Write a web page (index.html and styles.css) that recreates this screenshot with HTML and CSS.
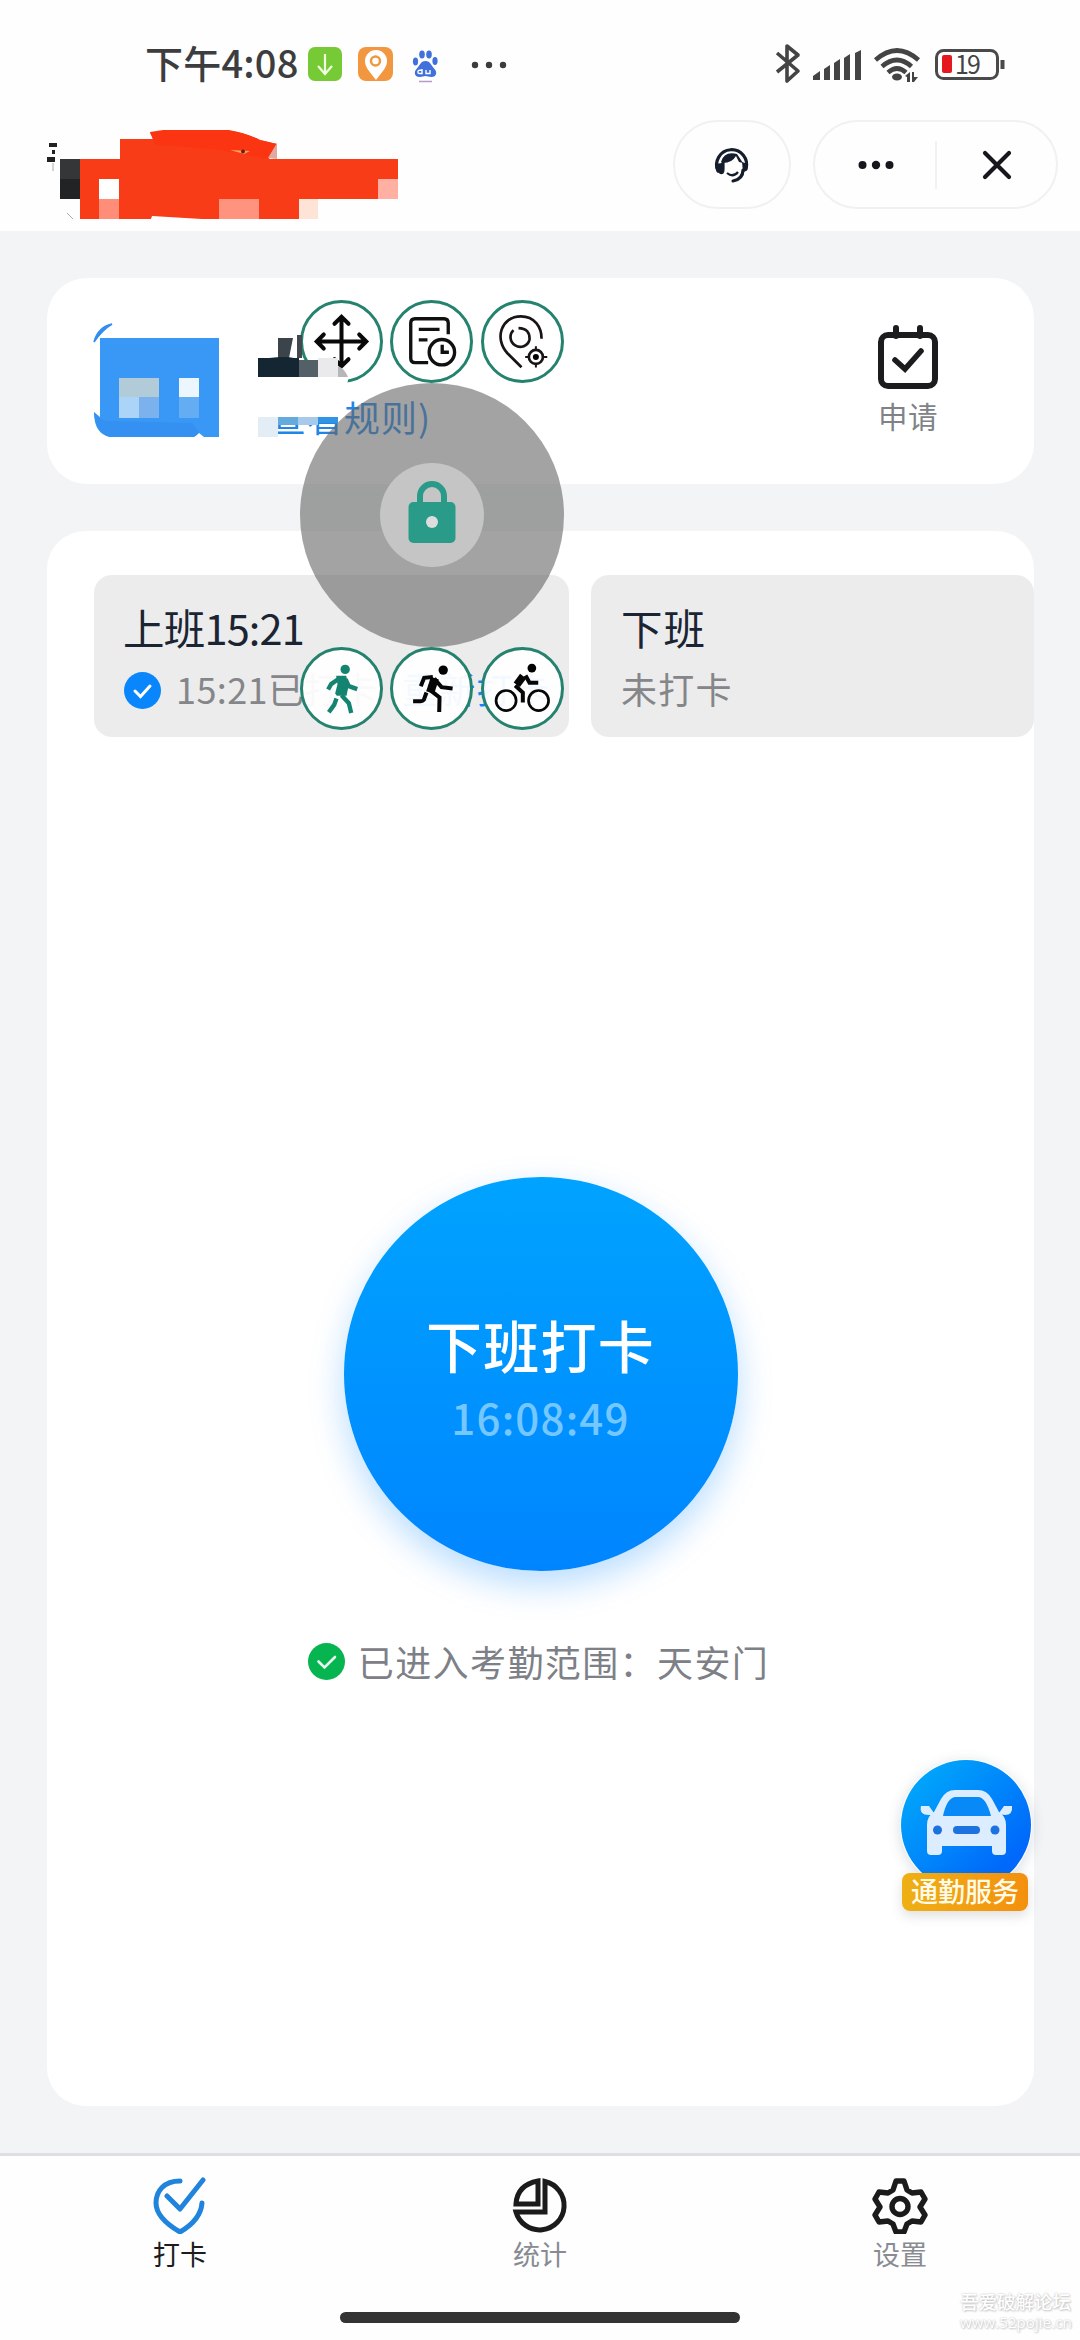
FILE: index.html
```html
<!DOCTYPE html>
<html lang="zh-CN">
<head>
<meta charset="utf-8">
<title>打卡</title>
<link rel="stylesheet" href="styles.css">
</head>
<body>
<div class="screen">
  <div class="status">
    <span class="clock">下午4:08</span>
    <svg class="notify" width="200" height="40" viewBox="0 0 200 40">
      <rect x="0" y="3" width="34" height="34" rx="7" fill="#76ca35"/>
      <path d="M17 10v19M10 22l7 8 7-8" fill="none" stroke="#efffe0" stroke-width="2.2"/>
      <rect x="50" y="3" width="35" height="34" rx="8" fill="#f2973f"/>
      <path d="M68 36C61 27 57 23 57 17a11 11 0 0 1 22 0c0 6-4 10-11 19z" fill="#fff"/>
      <circle cx="67.500" cy="17" r="4.500" fill="none" stroke="#f2973f" stroke-width="2.500"/>
      <g fill="#416fdc"><ellipse cx="107.500" cy="17.500" rx="2.600" ry="4"/><ellipse cx="114" cy="10.500" rx="2.800" ry="4"/><ellipse cx="121" cy="10.500" rx="2.800" ry="4"/><ellipse cx="127" cy="17" rx="2.600" ry="4"/><path d="M117.500 17c5 0 6 5 9 8s2 8-3 8c-3 0-4-1-6-1s-3 1-6 1c-5 0-6-5-3-8s4-8 9-8z"/></g>
      <path d="M114 25v4.500h-2.500a1.600 1.600 0 0 1 0-3.200h2.500M118 26v3.500h4V26" fill="none" stroke="#fff" stroke-width="1.400"/>
      <path d="M111 37.500h13" stroke="#b99bc8" stroke-width="1.500"/>
      <g fill="#3c3c3e"><circle cx="167" cy="21" r="3.200"/><circle cx="181" cy="21" r="3.200"/><circle cx="195" cy="21" r="3.200"/></g>
    </svg>
    <svg class="radios" width="234" height="44" viewBox="0 0 234 44">
      <path d="M2 13l21 18-11 10V6l11 9L2 32" fill="none" stroke="#444" stroke-width="3.600" stroke-linejoin="round"/>
      <g transform="translate(-3 0)"><g fill="#444"><path d="M41 40v-4l7-5v9z"/><path d="M52 40V29l6-4v15z"/><path d="M62 40V23l6-4v21z"/><path d="M72 40V18l6-4v26z"/><path d="M83 40V13l6-3v30z"/><ellipse cx="125" cy="37" rx="5" ry="3.500"/><path d="M133 36l5-4v10h-3v-5zM140 32h2v5h4l-4 5h-2z"/></g>
      <path d="M103.500 20q21.500-19 43 0M110 26.500q15-13 29.500 0M116 32.500q9-8 18 0" fill="none" stroke="#444" stroke-width="4.600"/></g>
      <rect x="161.500" y="10.500" width="61" height="28" rx="7" fill="none" stroke="#4a4a4a" stroke-width="3"/>
      <rect x="167" y="15" width="10" height="18" rx="2" fill="#e5181f"/>
      <path d="M227.500 20v9" stroke="#4a4a4a" stroke-width="4"/>
      <text x="180" y="34" class="battery">19</text>
    </svg>
  </div>

  <header class="bar">
    <svg class="masked-title" width="380" height="100" viewBox="30 130 380 100">
      <path d="M49 143h8v4h-8zM52 150h3v4h-3zM47 157h8v5h-8z" fill="#222"/>
      <path d="M53 163v8M67 213l6 6" stroke="#aaa"/>
      <path d="M60 159h20v20H60z" fill="#353638"/><path d="M60 179h20v20H60z" fill="#222324"/>
      <path d="M80 159h40v-20h34l-4-6q72-12 110 7l17 4-8 15h129v40h-99v20H202l-50-3-1 3H80z" fill="#f83c18"/>
      <path d="M155 145l-5-13q70-12 110 8l17 4-10 15q-50-12-112-14z" fill="#fb3512"/>
      <path d="M268 158l9-15v16z" fill="#e3a7a1"/>
      <path d="M99 179h20v20H99z" fill="#fff"/><path d="M99 199h20v20H99z" fill="#ff8d78"/>
      <path d="M219 199h40v20h-40z" fill="#ff937e"/><path d="M299 199h19v20h-19z" fill="#fde4d7"/><path d="M378 179h20v20h-20z" fill="#ffb0a3"/>
      <path d="M230 150l20 1-6 3z" fill="#ffa05e"/><circle cx="243" cy="151.500" r="2" fill="#62200e"/>
    </svg>
    <div class="pill service">
      <svg width="42" height="42" viewBox="0 0 42 42"><path d="M7 27a15 15 0 1 1 28-2M9 28q3 2 3-3v-6M32 26q0 9-10 11" fill="none" stroke="#151c2b" stroke-width="3.200" stroke-linecap="round"/><path d="M10 18q3-11 16-8l6 9-4-1-3-6q-4 7-13 7z" fill="#151c2b"/><path d="M4 20l7-1v10q-7 0-7-9zM31 18l6 2q0 8-5 8z" fill="#151c2b"/><path d="M16 29q6 5 11-1" fill="none" stroke="#151c2b" stroke-width="2.200"/></svg>
    </div>
    <div class="pill capsule">
      <svg width="36" height="12" viewBox="0 0 36 12" fill="#15171c"><circle cx="4.500" cy="6" r="4"/><circle cx="18" cy="6" r="4.200"/><circle cx="31.500" cy="6" r="4"/></svg>
      <i></i>
      <svg width="32" height="32" viewBox="0 0 32 32"><path d="M4 4l24 24M28 4L4 28" stroke="#15171c" stroke-width="4.200" stroke-linecap="round"/></svg>
    </div>
  </header>

  <main class="content">
    <section class="profile">
      <svg class="avatar" width="126" height="118" viewBox="93 322 126 118">
        <path d="M94 342q4-15 18-18-10 6-18 18z" fill="#328df0" stroke="#328df0" stroke-width="1.500"/>
        <path d="M100 338h119v99h-15l-5-4-5 4h-84q-16-3-16-25l6 5z" fill="#3997f6"/>
        <path d="M94 412q4 8 13 9l85 2 7 9q-2 5-8 5h-81q-14-4-16-25z" fill="#3490f1"/>
        <path d="M119 378h40v40h-40z" fill="#abd4f8"/><path d="M119 378h40v19h-40z" fill="#b1ccd8"/><path d="M139 397h20v21h-20z" fill="#7bb1ed"/>
        <path d="M179 378h20v19h-20z" fill="#ebf6fe"/><path d="M179 397h20v21h-20z" fill="#65adf3"/>
      </svg>
      <a class="rules">查看规则)</a>
      <div class="apply">
        <svg width="62" height="66" viewBox="0 0 62 66"><path d="M19 3v8M43 3v8" stroke="#1c1c1e" stroke-width="6" stroke-linecap="round"/><rect x="4" y="10" width="54" height="51" rx="7" fill="none" stroke="#1c1c1e" stroke-width="6"/><path d="M18 35l10 9 16-18" fill="none" stroke="#1c1c1e" stroke-width="5.600" stroke-linecap="round"/></svg>
        <span>申请</span>
      </div>
    </section>

    <section class="punch">
      <div class="shifts">
        <div class="shift first">
          <h3>上班15:21</h3>
          <p><svg width="37" height="37" viewBox="0 0 37 37"><circle cx="18.500" cy="18.500" r="18.500" fill="#0a86fc"/><path d="M11 19l5.500 5.500L26 14" fill="none" stroke="#fff" stroke-width="3" stroke-linecap="round"/></svg><span class="done">15:21已打卡</span><a>重新打卡</a></p>
        </div>
        <div class="shift second">
          <h3>下班</h3>
          <p><span>未打卡</span></p>
        </div>
      </div>
      <button class="round"><b>下班打卡</b><span>16:08:49</span></button>
      <div class="range"><svg width="37" height="37" viewBox="0 0 37 37"><circle cx="18.500" cy="18.500" r="18.500" fill="#06b550"/><path d="M10.500 18.500l6 6L27 14" fill="none" stroke="#e8fff0" stroke-width="2.600" stroke-linecap="round"/></svg><span>已进入考勤范围：天安门</span></div>
    </section>
  </main>

  <nav class="tabs">
    <div class="tab on"><svg width="56" height="58" viewBox="0 0 56 58"><path d="M28 5C12 5 4 15 4 27c0 12 12 22 24 29 12-7 21-16 22-29M15 20l13 13L51 4" fill="none" stroke="#2184dc" stroke-width="5" stroke-linecap="round" stroke-linejoin="round"/></svg><span>打卡</span></div>
    <div class="tab"><svg width="56" height="58" viewBox="0 0 56 58"><g fill="none" stroke="#1b1b1c" stroke-width="5"><path d="M26 5v23H4Q5 9 26 5z"/><path d="M33 5.500A24.500 24.500 0 1 1 4 36h29z"/></g></svg><span>统计</span></div>
    <div class="tab"><svg width="56" height="58" viewBox="0 0 56 58"><path d="M24 5h8l3 9 5 3 9-1 4 7-5 8 5 8-4 7-9-1-5 3-3 8h-8l-3-8-5-3-9 1-4-7 5-8-5-8 4-7 9 1 5-3z" fill="none" stroke="#1b1b1c" stroke-width="5.400" stroke-linejoin="round"/><circle cx="28" cy="30.500" r="8" fill="none" stroke="#1b1b1c" stroke-width="5.400"/></svg><span>设置</span></div>
  </nav>
  <div class="home"></div>

  <div class="commute">
    <svg width="132" height="132" viewBox="0 0 132 132">
      <defs><linearGradient id="sky" x1="0" y1="0" x2="1" y2="1"><stop offset=".1" stop-color="#00a8fb"/><stop offset=".8" stop-color="#0069fb"/></linearGradient></defs>
      <circle cx="66" cy="66" r="65" fill="url(#sky)"/>
      <g fill="#dcedff"><path d="M27 66q0-9 7-13l7-13q5-9 14-9h23q9 0 14 9l7 13q7 4 7 13v26q0 4-4 4h-6q-4 0-4-4v-5H42v5q0 4-4 4h-7q-4 0-4-4z"/><path d="M21 47h8l5 7q-1 2-5 2-10 0-8-9zM104 47h8q1 9-7 9-4 0-6-2z"/></g>
      <path d="M43 57q4-19 13-19h22q8 0 13 19z" fill="#0789f8"/>
      <g fill="#1c72df"><circle cx="37.500" cy="71" r="4.500"/><circle cx="95" cy="71" r="4.500"/><rect x="53" y="67" width="27" height="8" rx="4"/></g>
    </svg>
    <span>通勤服务</span>
  </div>

  <div class="floater">
    <div class="joystick"><div><svg width="52" height="66" viewBox="0 0 52 66"><path d="M14 27V17a12 12 0 0 1 24 0v10" fill="none" stroke="#2a9b88" stroke-width="6"/><rect x="2.500" y="23" width="47" height="41" rx="5" fill="#2a9b88"/><circle cx="26" cy="43" r="6" fill="#ddd"/></svg></div></div>
    <svg class="tool t1" viewBox="-115 -115 230 230"><path d="M-73 0H73M0-73V73M-21-53L0-74 21-53M-21 53L0 74 21 53M-53-21L-74 0-53 21M53-21L74 0 53 21" fill="none" stroke="#090909" stroke-width="12" stroke-linecap="round"/></svg>
    <svg class="tool t2" viewBox="-115 -115 230 230"><path d="M50-22v-33q0-13-13-13h-86q-13 0-13 13V50q0 13 13 13h39M-38-36h62M-38-5h26M32 10v22h20" fill="none" stroke="#101010" stroke-width="10"/><circle cx="31" cy="32" r="38" fill="none" stroke="#101010" stroke-width="10"/></svg>
    <svg class="tool t3" viewBox="-115 -115 230 230"><path d="M-3 77L-45 35C-85-8-64-75-5-75 36-75 57-43 57-8M-27-34A29 29 0 1 0 21-5M-12-40Q23-39 21-5" fill="none" stroke="#1a1515" stroke-width="8"/><circle cx="40" cy="46" r="21" fill="none" stroke="#1a1515" stroke-width="8"/><circle cx="40" cy="46" r="9"/><path d="M40 14v14M40 64v14M8 46h14M58 46h16" stroke="#1a1515" stroke-width="6"/></svg>
    <svg class="tool t4" viewBox="-115 -115 230 230"><g fill="none" stroke="#148370" stroke-width="13" stroke-linejoin="round"><path d="M-8-29l-23 16-9 16M12-28l10 21 25 9M0 20l22 24 7 29M-15 30l-7 19-16 22"/></g><path d="M-16-38H14l7 31-6 29h-29l-5-7 7-28z" fill="#148370"/><circle cx="11" cy="-57" r="14" fill="#148370"/></svg>
    <svg class="tool t5" viewBox="-115 -115 230 230"><g fill="none" stroke="#060606"><path d="M-32-7l10-25 26-2M8-30l22 26 33 4M-4 5l28 22-1 43M-15 12l-8 22q-3 4-9 4h-23" stroke-width="12"/><path d="M10-31L-4 12" stroke-width="25"/></g><circle cx="35" cy="-55" r="14"/></svg>
    <svg class="tool t6" viewBox="-115 -115 230 230"><g fill="none" stroke="#060606"><circle cx="-49" cy="36" r="30" stroke-width="8"/><circle cx="48" cy="36" r="30" stroke-width="8"/><path d="M9-39l12 22h26M-22-9L1 12v30" stroke-width="12"/><path d="M2-37l-19 26" stroke-width="23"/></g><circle cx="28" cy="-61" r="13"/></svg>
  </div>
  <svg class="name-mask" width="100" height="106" viewBox="256 332 100 106">
    <path d="M258 377h91l-8 27 2 12-8 2h-77z" fill="#fff"/>
    <path d="M278 338h15l-4 20h-11z" fill="#3b444b"/><path d="M297 335h5v23h-5z" fill="#42484d"/>
    <path d="M258 358h11q17-2 25 0h5v19h-41z" fill="#142631"/><path d="M299 360h19v17h-19z" fill="#546067"/><path d="M318 358h20v19h-20z" fill="#eae9ec"/><path d="M338 366q7 3 10 11h-10z" fill="#b7b6b8"/>
    <path d="M258 417h20v20h-20z" fill="#e3edf5"/><path d="M278 417h20v8h-20z" fill="#65aadd"/><path d="M298 417h20v8h-20z" fill="#a7c9ea"/><path d="M318 417h20v6h-20z" fill="#3193e4"/>
  </svg>
  <div class="watermark"><b>吾爱破解论坛</b><span>www.52pojie.cn</span></div>
</div>
</body>
</html>
```
FILE: styles.css
```css
* { box-sizing: border-box; }
body, h3, p { margin: 0; }
body { background: #fefefe; font-family: "Noto Sans CJK SC", sans-serif; }
svg { display: block; flex: none; }
.screen { position: relative; width: 1080px; height: 2340px; overflow: hidden; display: flex; flex-direction: column; }

.status { height: 110px; padding: 18px 74px 0 145px; display: flex; align-items: center; }
.clock { width: 163px; font-size: 38px; line-height: 50px; font-weight: 500; letter-spacing: .2px; color: #3d3d3f; white-space: nowrap; height: 92px; padding-top: 19px; }
.notify { align-self: flex-start; margin-top: 26px; }
.radios { align-self: flex-start; margin: 22px -3px 0 auto; }
.battery { font: 25px "Noto Sans CJK SC", sans-serif; fill: #444; letter-spacing: -2px; }

.bar { height: 121px; padding: 0 22px 0 30px; display: flex; align-items: flex-start; }
.masked-title { margin-top: 20px; }
.pill { height: 89px; margin-top: 10px; border: 2px solid #f1f1f2; border-radius: 45px; display: flex; align-items: center; justify-content: center; }
.service { width: 118px; margin-left: auto; }
.capsule { width: 245px; margin-left: 22px; padding: 0 43px; justify-content: space-between; }
.capsule i { width: 2px; height: 48px; background: #f2f2f3; margin-left: -3px; }

.content { height: 1922px; background: #f3f4f6; padding: 47px 46px 0 47px; display: flex; flex-direction: column; gap: 47px; }
.profile { height: 206px; background: #fff; border-radius: 40px; display: flex; padding-left: 46px; }
.avatar { margin-top: 44px; }
.rules { margin: 112px 0 0 51px; font-size: 36px; line-height: 52px; letter-spacing: 1px; color: #1f86e8; }
.apply { margin: 47px 95px 0 auto; display: flex; flex-direction: column; align-items: center; }
.apply span { font-size: 29.5px; line-height: 40px; margin-top: 4px; color: #7f8389; letter-spacing: .5px; }

.punch { height: 1575px; background: #fff; border-radius: 38px; padding-top: 44px; display: flex; flex-direction: column; align-items: center; }
.shifts { width: 100%; padding-left: 47px; display: flex; gap: 22px; }
.shift { height: 162px; background: #ececec; border-radius: 18px; padding: 22px 0 0 30px; white-space: nowrap; overflow: hidden; }
.first { width: 475px; padding-left: 29px; }
.second { flex: 1; }
.shift h3 { font-size: 41.5px; line-height: 60px; margin-bottom: 3px; font-weight: 400; color: #1b2433; letter-spacing: 1px; }
.first h3 { letter-spacing: -.8px; }
.shift p { display: flex; align-items: center; height: 60px; font-size: 36px; letter-spacing: 1.2px; color: #85868a; }
.shift p span, .shift a { margin-top: -5px; }
.shift .done { margin-left: 15px; letter-spacing: .4px; width: 226px; }
.shift a { color: #1683fa; }
.first p svg { margin-left: 1px; }
.round { width: 394px; height: 394px; margin-top: 440px; border: 0; border-radius: 50%; background: linear-gradient(#00a3ff, #0085ff); box-shadow: 0 14px 34px rgba(0, 133, 255, .28); color: #fff; font-family: inherit; display: flex; flex-direction: column; align-items: center; padding: 130px 0 0; }
.round b { font-size: 56px; line-height: 74px; font-weight: 500; letter-spacing: 1.2px; }
.round span { font-size: 42px; line-height: 60px; margin-top: 6px; font-weight: 500; letter-spacing: 1.2px; color: #75c7ff; }
.range { margin: 62px 4px 0 0; height: 56px; display: flex; align-items: center; gap: 13px; font-size: 36px; letter-spacing: 1.4px; color: #7d8086; white-space: nowrap; }

.tabs { height: 145px; background: #fefefe; border-top: 3px solid #dddfe2; display: flex; padding-top: 20px; }
.tab { flex: 1; display: flex; flex-direction: column; align-items: center; font-size: 27px; line-height: 40px; color: #898b92; }
.tab span { margin-top: 0; }
.on { color: #1c1c1e; }
.home { width: 400px; height: 11px; margin: 14px auto 0; border-radius: 6px; background: #333; }

.commute { position: absolute; left: 900px; top: 1759px; width: 132px; height: 152px; }
.commute svg { border-radius: 50%; box-shadow: 0 3px 14px rgba(60, 80, 100, .2); }
.commute span { position: absolute; left: 2px; bottom: 0; width: 126px; height: 38px; border-radius: 8px; background: linear-gradient(90deg, #eeb014, #f48f0e); color: #fffbe8; font-size: 27px; line-height: 36px; font-weight: 500; text-align: center; white-space: nowrap; box-shadow: 0 5px 12px rgba(100, 100, 100, .2); }

.floater { position: absolute; left: 300px; top: 300px; width: 264px; height: 430px; }
.joystick { position: absolute; left: 0; top: 83px; width: 264px; height: 264px; border-radius: 50%; background: rgba(102, 102, 102, .6); display: flex; align-items: center; justify-content: center; }
.joystick div { width: 104px; height: 104px; border-radius: 50%; background: #c5c5c5; display: flex; align-items: center; justify-content: center; }
.joystick svg { margin-top: -6px; }
.tool { position: absolute; width: 83px; height: 83px; border: 3px solid #25826f; border-radius: 50%; background: rgba(255, 255, 255, .95); }
.t1, .t2, .t3 { top: 0; }
.t4, .t5, .t6 { top: 347px; }
.t1, .t4 { left: 0; }
.t2, .t5 { left: 90px; }
.t3, .t6 { left: 181px; }
.name-mask { position: absolute; left: 256px; top: 332px; }

.watermark { position: absolute; left: 960px; top: 2289px; width: 115px; color: #fff; text-shadow: 0 0 2px #bbb, 1px 1px 2px #ccc; white-space: nowrap; display: flex; flex-direction: column; }
.watermark b { font-size: 18.5px; line-height: 25px; font-weight: 500; }
.watermark span { font: 15px/17px "Open Sans", sans-serif; letter-spacing: .1px; }
```
